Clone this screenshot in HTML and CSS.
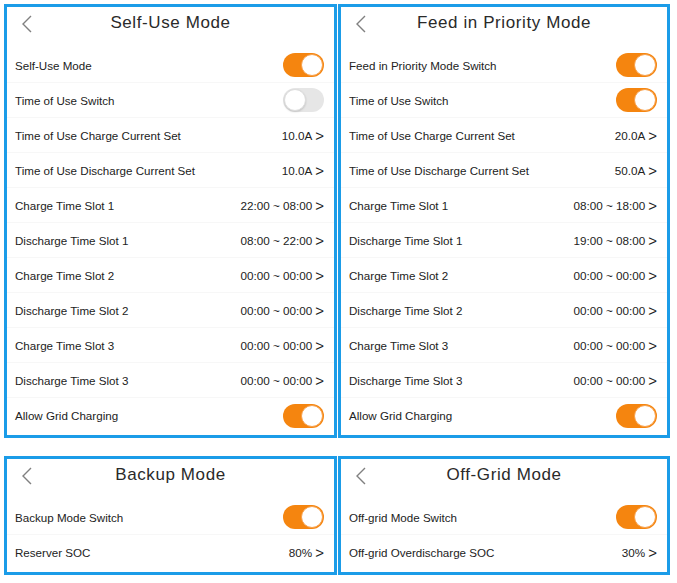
FILE: index.html
```html
<!DOCTYPE html>
<html lang="en">
	<head>
		<meta name="viewport" content="width=device-width, initial-scale=1.0" />
		<title>Working Modes</title>
		<link rel="stylesheet" href="styles.css">
	</head>
	<body>
		<div class="sheet">
			<section class="panel -tall">
				<header class="head">
					<svg class="back" width="12" height="18" viewBox="0 0 12 18"><polyline points="10,1 2,9 10,17" /></svg>
					<h1>Self-Use Mode</h1>
				</header>
				<ul class="rows">
					<li><span>Self-Use Mode</span><i class="switch -on"></i></li>
					<li><span>Time of Use Switch</span><i class="switch"></i></li>
					<li><span>Time of Use Charge Current Set</span><b>10.0A<em>&gt;</em></b></li>
					<li><span>Time of Use Discharge Current Set</span><b>10.0A<em>&gt;</em></b></li>
					<li><span>Charge Time Slot 1</span><b>22:00 ~ 08:00<em>&gt;</em></b></li>
					<li><span>Discharge Time Slot 1</span><b>08:00 ~ 22:00<em>&gt;</em></b></li>
					<li><span>Charge Time Slot 2</span><b>00:00 ~ 00:00<em>&gt;</em></b></li>
					<li><span>Discharge Time Slot 2</span><b>00:00 ~ 00:00<em>&gt;</em></b></li>
					<li><span>Charge Time Slot 3</span><b>00:00 ~ 00:00<em>&gt;</em></b></li>
					<li><span>Discharge Time Slot 3</span><b>00:00 ~ 00:00<em>&gt;</em></b></li>
					<li><span>Allow Grid Charging</span><i class="switch -on"></i></li>
				</ul>
			</section>

			<section class="panel -tall">
				<header class="head">
					<svg class="back" width="12" height="18" viewBox="0 0 12 18"><polyline points="10,1 2,9 10,17" /></svg>
					<h1>Feed in Priority Mode</h1>
				</header>
				<ul class="rows">
					<li><span>Feed in Priority Mode Switch</span><i class="switch -on"></i></li>
					<li><span>Time of Use Switch</span><i class="switch -on"></i></li>
					<li><span>Time of Use Charge Current Set</span><b>20.0A<em>&gt;</em></b></li>
					<li><span>Time of Use Discharge Current Set</span><b>50.0A<em>&gt;</em></b></li>
					<li><span>Charge Time Slot 1</span><b>08:00 ~ 18:00<em>&gt;</em></b></li>
					<li><span>Discharge Time Slot 1</span><b>19:00 ~ 08:00<em>&gt;</em></b></li>
					<li><span>Charge Time Slot 2</span><b>00:00 ~ 00:00<em>&gt;</em></b></li>
					<li><span>Discharge Time Slot 2</span><b>00:00 ~ 00:00<em>&gt;</em></b></li>
					<li><span>Charge Time Slot 3</span><b>00:00 ~ 00:00<em>&gt;</em></b></li>
					<li><span>Discharge Time Slot 3</span><b>00:00 ~ 00:00<em>&gt;</em></b></li>
					<li><span>Allow Grid Charging</span><i class="switch -on"></i></li>
				</ul>
			</section>

			<section class="panel">
				<header class="head">
					<svg class="back" width="12" height="18" viewBox="0 0 12 18"><polyline points="10,1 2,9 10,17" /></svg>
					<h1>Backup Mode</h1>
				</header>
				<ul class="rows">
					<li><span>Backup Mode Switch</span><i class="switch -on"></i></li>
					<li><span>Reserver SOC</span><b>80%<em>&gt;</em></b></li>
				</ul>
			</section>

			<section class="panel">
				<header class="head">
					<svg class="back" width="12" height="18" viewBox="0 0 12 18"><polyline points="10,1 2,9 10,17" /></svg>
					<h1>Off-Grid Mode</h1>
				</header>
				<ul class="rows">
					<li><span>Off-grid Mode Switch</span><i class="switch -on"></i></li>
					<li><span>Off-grid Overdischarge SOC</span><b>30%<em>&gt;</em></b></li>
				</ul>
			</section>
		</div>
	</body>
</html>
```

FILE: styles.css
```css
body {
	margin: 0;
	background-color: #fff;
	font-family: "Liberation Sans", Arial, sans-serif;
	color: #222;
}

.sheet {
	display: grid;
	grid-template-columns: 333px 332px;
	grid-template-rows: 434px 119px;
	column-gap: 1px;
	row-gap: 18px;
	padding: 4px;
}

.panel {
	box-sizing: border-box;
	border: 3px solid #1b9ce8;
	background-color: #fff;
}

.head {
	position: relative;
	height: 41px;
	box-sizing: border-box;
	padding-top: 5px;
}

.head h1 {
	margin: 0;
	font-size: 17px;
	font-weight: normal;
	line-height: 22px;
	letter-spacing: 0.6px;
	text-align: center;
	color: #2a2a2a;
}

.back {
	position: absolute;
	left: 14px;
	top: 8px;
	fill: none;
	stroke: #808080;
	stroke-width: 1.4;
}

.rows {
	margin: 0;
	padding: 0;
	list-style: none;
}

.rows li {
	display: flex;
	align-items: center;
	justify-content: space-between;
	height: 35px;
	box-sizing: border-box;
	padding: 0 10px 0 8px;
	border-bottom: 1px solid #f7f7f7;
	font-size: 11.6px;
}

.rows li:last-child {
	border-bottom: none;
}

.rows b {
	display: flex;
	align-items: center;
	font-weight: normal;
	font-size: 11.7px;
	color: #222;
}

.rows em {
	font-style: normal;
	font-size: 15px;
	margin-left: 3px;
	line-height: 1;
}

.switch {
	position: relative;
	width: 41px;
	height: 24px;
	border-radius: 12px;
	background-color: #e6e6e6;
}

.switch::after {
	content: "";
	position: absolute;
	top: 1px;
	left: 1px;
	width: 20px;
	height: 20px;
	border-radius: 50%;
	border: 1px solid #ddd;
	background-color: #fff;
	box-shadow: 0 1px 2px rgba(0, 0, 0, 0.15);
}

.switch.-on {
	background-color: #f5850f;
}

.switch.-on::after {
	left: auto;
	right: 1px;
	border-color: #f7a04a;
	box-shadow: none;
}
```
